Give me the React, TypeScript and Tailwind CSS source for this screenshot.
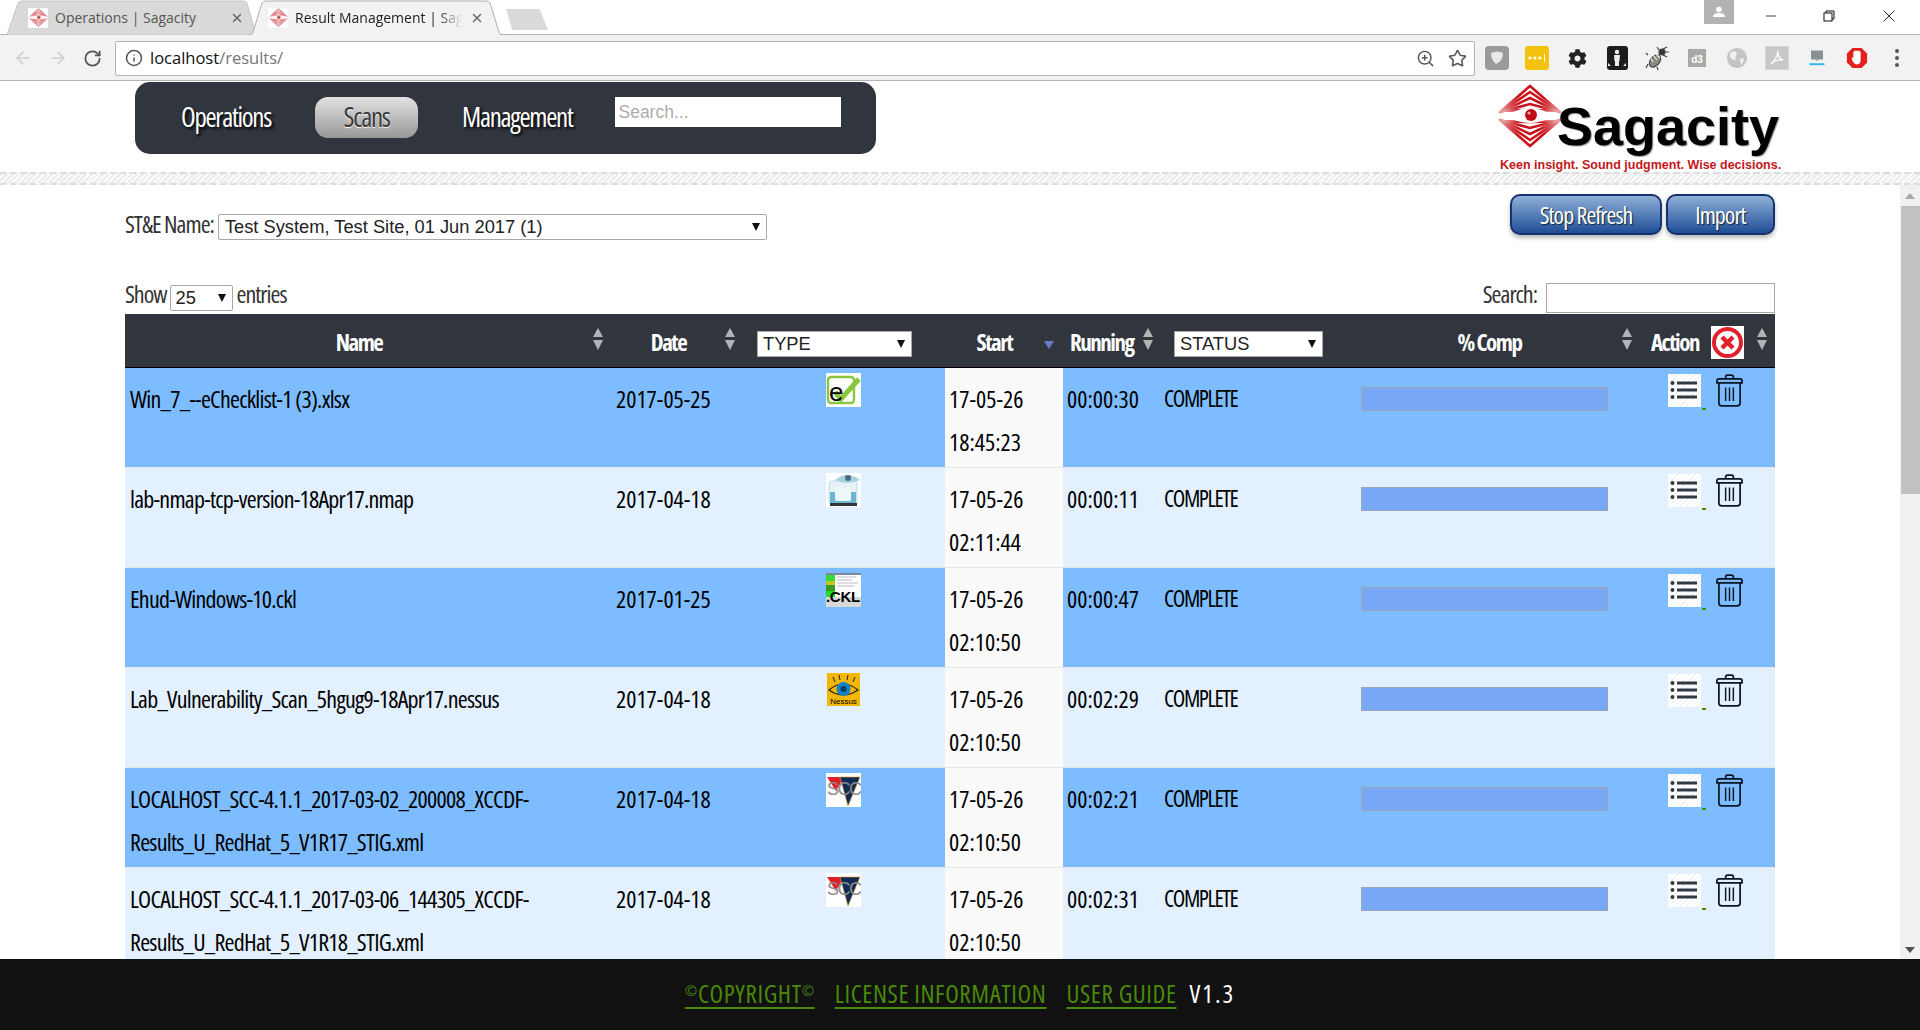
import React from "react";
import { ArrowLeft, ArrowRight, RotateCw, Info, ZoomIn, Star, X, Minus } from "lucide-react";
import { FaCog } from "react-icons/fa";

const rows = [
  { name: ["Win_7_--eChecklist-1 (3).xlsx"], date: "2017-05-25", type: "e", start: ["17-05-26", "18:45:23"], run: "00:00:30" },
  { name: ["lab-nmap-tcp-version-18Apr17.nmap"], date: "2017-04-18", type: "nmap", start: ["17-05-26", "02:11:44"], run: "00:00:11" },
  { name: ["Ehud-Windows-10.ckl"], date: "2017-01-25", type: "ckl", start: ["17-05-26", "02:10:50"], run: "00:00:47" },
  { name: ["Lab_Vulnerability_Scan_5hgug9-18Apr17.nessus"], date: "2017-04-18", type: "nessus", start: ["17-05-26", "02:10:50"], run: "00:02:29" },
  { name: ["LOCALHOST_SCC-4.1.1_2017-03-02_200008_XCCDF-", "Results_U_RedHat_5_V1R17_STIG.xml"], date: "2017-04-18", type: "scc", start: ["17-05-26", "02:10:50"], run: "00:02:21" },
  { name: ["LOCALHOST_SCC-4.1.1_2017-03-06_144305_XCCDF-", "Results_U_RedHat_5_V1R18_STIG.xml"], date: "2017-04-18", type: "scc", start: ["17-05-26", "02:10:50"], run: "00:02:31" },
];

function Diamond({ className }: { className?: string }) {
  const ups = [0, 6, 12, 18, 24];
  return (
    <svg viewBox="0 0 64 64" className={className}>
      <defs>
        <linearGradient id="fade" x1="0" x2="1" y1="0" y2="0">
          <stop offset="0" stopColor="#e8a0a0" />
          <stop offset="0.3" stopColor="#c8141c" />
          <stop offset="0.7" stopColor="#c8141c" />
          <stop offset="1" stopColor="#e8a0a0" />
        </linearGradient>
      </defs>
      {ups.map((d) => (
        <g key={d} fill="none" stroke="url(#fade)" strokeWidth="2.6">
          <path d={`M${1 + d * 0.2} ${29 - d * 0.1}L32 ${2 + d}L${63 - d * 0.2} ${29 - d * 0.1}`} />
          <path d={`M${1 + d * 0.2} ${35 + d * 0.1}L32 ${62 - d}L${63 - d * 0.2} ${35 + d * 0.1}`} />
        </g>
      ))}
      <path d="M8 32Q32 16 56 32Q32 46 8 32Z" fill="#fff" />
      <circle cx="33" cy="31" r="6" fill="#c00d14" />
      <circle cx="31" cy="29" r="1.6" fill="#f6a0a0" />
    </svg>
  );
}

function Tab({ title, active }: { title: string; active?: boolean }) {
  return (
    <div className={`relative flex items-center h-[35px] ${active ? "w-[262px] -ml-[9px] z-10 pl-[21px] pr-[25px]" : "w-[249px] ml-[7px] pl-[21px] pr-[12px]"}`}>
      <svg className="absolute inset-0 w-full h-full" viewBox={active ? "0 0 262 35" : "0 0 249 35"} preserveAspectRatio="none">
        {active ? (
          <path d="M0 35 L2 35 Q5 35 6 32 L15 3 Q16 1 19 1 L239 1 Q242 1 243 3 L252 32 Q253 35 256 35 L262 35" fill="#f2f2f2" stroke="#b0b0b0" />
        ) : (
          <path d="M0 35 L11 3 Q12 1 15 1 L236 1 Q239 1 240 3 L249 35Z" fill="#d9d9d9" stroke="#c4c4c4" />
        )}
      </svg>
      <span className="relative w-[20px] h-[20px] bg-white flex items-center justify-center shrink-0">
        <Diamond className="w-[19px] h-[19px] opacity-75" />
      </span>
      <span className={`relative ml-[7px] flex-1 min-w-0 overflow-hidden whitespace-nowrap text-[14px] font-['Open_Sans'] ${active ? "text-[#222] [mask-image:linear-gradient(to_right,#000_85%,transparent)]" : "text-[#555]"}`}>{title}</span>
      <X className={`relative w-[14px] h-[14px] shrink-0 text-[#666] ${active ? "ml-[8px]" : "ml-[4px]"}`} strokeWidth={2.4} />
    </div>
  );
}

const Slot = ({ children }: { children: React.ReactNode }) => <span className="w-[24px] h-[24px] flex items-center justify-center shrink-0">{children}</span>;

function ExtIcons() {
  return (
    <div className="flex items-center gap-[16px] ml-[10px]">
      <Slot><span className="w-[24px] h-[24px] rounded-[4px] bg-[#9a9a9a] flex items-center justify-center">
        <svg viewBox="0 0 16 16" className="w-[16px] h-[16px]"><path d="M2 3Q8 0 14 3Q14 11 7 14Q2 10 2 3Z" fill="#e8e8e8" /></svg>
      </span></Slot>
      <Slot><span className="w-[24px] h-[24px] rounded-[3px] bg-[#f4c20d] flex items-center justify-center">
        <svg viewBox="0 0 20 8" className="w-[20px] h-[8px]" fill="#fff"><circle cx="3" cy="4" r="1.6" /><circle cx="8" cy="4" r="1.6" /><circle cx="13" cy="4" r="1.6" /><rect x="17" y="0" width="1" height="8" /></svg>
      </span></Slot>
      <Slot><FaCog className="w-[19px] h-[19px] text-[#222]" /></Slot>
      <Slot><span className="w-[21px] h-[24px] rounded-[3px] bg-[#1c1c1c] flex items-center justify-center">
        <svg viewBox="0 0 20 20" className="w-[20px] h-[20px]" fill="#eee"><circle cx="10" cy="4" r="2.2" /><path d="M7 7H13L12.5 13H12V18H8V13H7.5Z" /><path d="M1 15L4 18H1ZM19 15L16 18H19Z" /></svg>
      </span></Slot>
      <Slot><svg viewBox="0 0 24 24" className="w-[24px] h-[24px]" fill="none" stroke="#444" strokeWidth="1.2">
        <ellipse cx="10" cy="15" rx="4.5" ry="7" transform="rotate(40 10 15)" fill="#8a8a80" />
        <path d="M5 11L8 16M8 9L12 14M11 8L15 12" stroke="#eee" />
        <circle cx="17" cy="6" r="3" fill="#333" />
        <path d="M18 3L22 1M20 6H24M18 9L22 11M14 4L12 1M3 18L1 22M12 21L13 24M3 9L1 7" />
      </svg></Slot>
      <Slot><span className="w-[18px] h-[18px] bg-[#a8a8a8] text-white text-[10px] font-bold flex items-end justify-center font-['Liberation_Sans'] leading-[14px]">d3</span></Slot>
      <Slot><svg viewBox="0 0 24 24" className="w-[22px] h-[22px]"><circle cx="12" cy="12" r="11" fill="#c4c4c4" /><path d="M5 6Q10 3 12 7Q9 11 11 14Q6 14 4 10ZM15 13L20 12L17 20Z" fill="#f2f2f2" /></svg></Slot>
      <Slot><span className="w-[24px] h-[24px] bg-[#c8c8c8] border border-[#d6d6d6] flex items-center justify-center">
        <svg viewBox="0 0 16 16" className="w-[16px] h-[16px]" fill="none" stroke="#fff" strokeWidth="1.3"><path d="M2 14Q8 9 9 1Q8 8 14 10Q7 9 2 14Z" /></svg>
      </span></Slot>
      <Slot><svg viewBox="0 0 24 24" className="w-[18px] h-[18px]"><rect x="4" y="2" width="16" height="12" fill="#8a8f93" /><path d="M10 14H14L12 16Z" fill="#8a8f93" /><rect x="2" y="19" width="20" height="2.5" fill="#29b6f6" /></svg></Slot>
      <Slot><svg viewBox="0 0 24 24" className="w-[22px] h-[22px]"><path d="M7 1H17L23 7V17L17 23H7L1 17V7Z" fill="#e2211c" /><path d="M8 12V6Q8 5 9 5V4H15V5Q16 5 16 6V14Q16 19 12 19Q9 19 7 15L6 12Q7 11 8 12Z" fill="#fff" /></svg></Slot>
      <Slot><svg viewBox="0 0 6 20" className="w-[6px] h-[20px]" fill="#555"><circle cx="3" cy="3" r="2" /><circle cx="3" cy="10" r="2" /><circle cx="3" cy="17" r="2" /></svg></Slot>
    </div>
  );
}

function Sel({ label, className }: { label: string; className: string }) {
  return (
    <div className={`relative flex items-center bg-white border border-[#a8a8a8] font-['Liberation_Sans'] [font-stretch:normal] font-normal tracking-normal text-[18.3px] text-[#222] [text-shadow:none] ${className}`}>
      <span className="whitespace-nowrap">{label}</span>
      <span className="absolute right-[6px] top-1/2 -translate-y-1/2 w-0 h-0 border-x-[4px] border-x-transparent border-t-[8px] border-t-[#111]" />
    </div>
  );
}

function SortArrows({ className, down }: { className?: string; down?: boolean }) {
  if (down)
    return (
      <svg viewBox="0 0 10 22" className={`w-[10px] h-[22px] shrink-0 ${className ?? ""}`}><path d="M0 12H10L5 20Z" fill="#6a78c8" /></svg>
    );
  return (
    <svg viewBox="0 0 10 22" className={`w-[10px] h-[22px] shrink-0 -mt-[3px] ${className ?? ""}`}><path d="M5 0L10 9H0Z" fill="#b4b4b4" /><path d="M0 12H10L5 22Z" fill="#b4b4b4" /></svg>
  );
}

function TypeIcon({ t }: { t: string }) {
  if (t === "e")
    return (
      <span className="relative block w-[35px] h-[34px] bg-white overflow-hidden">
        <svg viewBox="0 0 35 34" className="w-full h-full">
          <rect x="2" y="4" width="26" height="26" rx="3" fill="none" stroke="#8cc63f" strokeWidth="2.4" />
          <path d="M9 19L15 26L33 6" fill="none" stroke="#8cc63f" strokeWidth="5" />
        </svg>
        <span className="absolute left-[3px] top-[6px] text-[26px] leading-[26px] text-black font-['Liberation_Sans'] [font-stretch:normal] tracking-normal">e</span>
      </span>
    );
  if (t === "nmap")
    return (
      <span className="block w-[35px] h-[34px] bg-white">
        <svg viewBox="0 0 35 34" className="w-full h-full">
          <rect x="3" y="8" width="28" height="23" rx="3" fill="#e6f2f6" stroke="#bcd8e2" />
          <rect x="4" y="19" width="26" height="11" fill="#6db6cf" />
          <rect x="9" y="14" width="16" height="14" rx="2" fill="#eef7fa" />
          <rect x="4" y="30" width="27" height="3" fill="#333" />
          <path d="M9 7Q21 -3 34 7Q21 13 9 7Z" fill="#a6d3e2" />
          <circle cx="22" cy="5" r="3" fill="#4b6b80" />
        </svg>
      </span>
    );
  if (t === "ckl")
    return (
      <span className="relative block w-[35px] h-[34px] bg-white overflow-hidden">
        <svg viewBox="0 0 35 34" className="w-full h-full">
          <rect x="0" y="0" width="35" height="2" fill="#7c8aa0" />
          <rect x="0" y="2" width="9" height="6" fill="#38d838" />
          <rect x="0" y="8" width="9" height="4" fill="#c0c820" />
          <rect x="0" y="12" width="9" height="6" fill="#3a9a28" />
          <rect x="0" y="18" width="9" height="6" fill="#1fe01f" />
          <rect x="0" y="24" width="35" height="10" fill="#d8d8d8" />
          <path d="M11 4H30M11 7H26M11 10H32M11 13H28" stroke="#bbb" strokeWidth="1" />
        </svg>
        <span className="absolute left-0 top-[16px] text-[15px] leading-[16px] font-bold text-black font-['Liberation_Sans'] [font-stretch:normal] tracking-[-0.3px]">.CKL</span>
      </span>
    );
  if (t === "nessus")
    return (
      <span className="relative block ml-[1px] w-[33px] h-[33px] bg-[#f2b705] overflow-hidden">
        <svg viewBox="0 0 33 33" className="w-full h-full">
          <path d="M2 17Q16 5 31 17Q16 27 2 17Z" fill="#f2b705" stroke="#222" strokeWidth="1.2" />
          <circle cx="16.5" cy="16" r="7" fill="#1383c6" />
          <circle cx="16.5" cy="16" r="3" fill="#0a3a66" />
          <path d="M8 9L6 4M13 7L12 2M20 7L21 2M26 9L28 4" stroke="#222" strokeWidth="1" />
        </svg>
        <span className="absolute inset-x-0 bottom-0 text-center text-[8px] leading-[9px] text-black font-['Liberation_Sans'] [font-stretch:normal] tracking-normal">Nessus</span>
      </span>
    );
  return (
    <span className="relative block w-[35px] h-[34px] bg-white overflow-hidden">
      <svg viewBox="0 0 35 34" className="w-full h-full">
        <path d="M1 4H18L10 18Z" fill="#e02027" />
        <path d="M14 4H34L22 33Z" fill="#0e2a55" stroke="#e8a020" strokeWidth="0.6" />
      </svg>
      <span className="absolute left-[1px] top-[6px] text-[18px] leading-[20px] tracking-[-1.5px] text-[#8a8a8a] font-normal font-['Liberation_Sans'] [font-stretch:normal]">SCC</span>
    </span>
  );
}

function ListIcon() {
  return (
    <span className="relative block w-[33px] h-[33px] bg-[repeating-linear-gradient(135deg,#ffffff_0px,#ffffff_3px,#f0f0f0_3px,#f0f0f0_4px)]">
      <svg viewBox="0 0 33 33" className="w-full h-full" fill="#2f3b44">
        <circle cx="4.5" cy="9" r="2" /><rect x="9" y="7.5" width="20" height="3" />
        <circle cx="4.5" cy="16" r="2" /><rect x="9" y="14.5" width="20" height="3" />
        <circle cx="4.5" cy="23" r="2" /><rect x="9" y="21.5" width="20" height="3" />
      </svg>
      <span className="absolute -right-[5px] bottom-[-3px] w-[4px] h-[2px] bg-[#4a8a08]" />
    </span>
  );
}

function Trash() {
  return (
    <svg viewBox="0 0 28 34" className="w-[27px] h-[33px]" fill="none" stroke="#0c1622" strokeWidth="1.8">
      <path d="M10 4V3Q10 1 12 1H16Q18 1 18 3V4" />
      <path d="M3 5H25Q27 5 27 7V9H1V7Q1 5 3 5Z" />
      <path d="M3 9V30Q3 33 6 33H22Q25 33 25 30V9" />
      <path d="M10 14V28M14 14V28M18 14V28" strokeWidth="1.5" />
    </svg>
  );
}

export default function App() {
  return (
    <div className="w-[1920px] h-[1030px] flex flex-col overflow-hidden bg-white font-['Open_Sans',sans-serif] [font-stretch:75%] text-[#111]">
      {/* tab strip */}
      <div className="relative flex h-[35px] shrink-0 bg-white border-b border-[#b4b4b4] [font-stretch:normal]">
        <Tab title="Operations | Sagacity" />
        <Tab title="Result Management | Sagacity" active />
        <span className="ml-[-3px] mt-[9px] w-[42px] h-[21px] bg-[#d9d9d9] [clip-path:polygon(0_0,80%_0,100%_100%,15%_100%)]" />
        <div className="ml-auto flex items-start text-[#111]">
          <span className="w-[30px] h-[24px] bg-[#b2b2b2] flex items-center justify-center">
            <svg viewBox="0 0 12 12" className="w-[12px] h-[12px]" fill="#fff"><circle cx="6" cy="3.5" r="2.8" /><path d="M0 11Q0 7 6 7Q12 7 12 11Z" /></svg>
          </span>
          <span className="w-[62px] h-[32px] flex items-center justify-center pl-[12px]"><Minus className="w-[16px] h-[16px]" strokeWidth={1.2} /></span>
          <span className="w-[62px] h-[32px] flex items-center justify-center pl-[4px]">
            <svg viewBox="0 0 12 12" className="w-[12px] h-[12px]" fill="none" stroke="#111"><path d="M3 3V1H11V9H9" /><rect x="1" y="3" width="8" height="8" /></svg>
          </span>
          <span className="w-[62px] h-[32px] flex items-center justify-center"><X className="w-[20px] h-[20px]" strokeWidth={1.1} /></span>
        </div>
      </div>
      {/* toolbar */}
      <div className="flex items-center h-[46px] pt-[1px] shrink-0 bg-[#f2f2f2] border-b border-[#b4b4b4] [font-stretch:normal]">
        <div className="flex items-center w-[115px] pl-[13px] gap-[15px]">
          <ArrowLeft className="w-[20px] h-[20px] text-[#d0d0d0]" strokeWidth={2} />
          <ArrowRight className="w-[20px] h-[20px] text-[#d0d0d0]" strokeWidth={2} />
          <RotateCw className="w-[19px] h-[19px] text-[#555]" strokeWidth={2.2} />
        </div>
        <div className="flex items-center w-[1360px] h-[35px] bg-white border border-[#b4b4b4] rounded-[2px] pl-[9px] pr-[7px]">
          <Info className="w-[18px] h-[18px] text-[#555]" strokeWidth={2} />
          <span className="ml-[7px] text-[16.5px] font-['Open_Sans'] text-[#111]">localhost<span className="text-[#777]">/results/</span></span>
          <ZoomIn className="ml-auto w-[19px] h-[19px] text-[#555]" strokeWidth={1.8} />
          <Star className="ml-[13px] w-[19px] h-[19px] text-[#555]" strokeWidth={2} />
        </div>
        <ExtIcons />
      </div>
      {/* app header */}
      <div className="flex h-[104px] shrink-0 relative">
        <div className="ml-[135px] mt-[1px] w-[741px] h-[72px] bg-[#31353d] rounded-[15px] flex items-start text-white text-[27px] font-medium tracking-[-1.3px] [text-shadow:2px_2px_3px_#000]">
          <span className="ml-[46px] mt-[15px] leading-[40px]">Operations</span>
          <span className="ml-[44px] mt-[15px] w-[103px] h-[41px] rounded-[13px] bg-gradient-to-b from-[#e2e2e2] to-[#999] text-[#3a3a3a] flex items-center justify-center [text-shadow:0_1px_1px_#fff]">Scans</span>
          <span className="ml-[44px] mt-[15px] leading-[40px]">Management</span>
          <input readOnly placeholder="Search..." className="ml-[43px] mt-[15px] w-[226px] h-[30px] bg-white px-[3px] text-[17.5px] font-['Liberation_Sans'] [font-stretch:normal] tracking-normal font-normal text-[#555] [text-shadow:none] outline-none" />
        </div>
        <div className="ml-[622px] mt-[3px] w-[290px] flex flex-col [font-stretch:normal]">
          <div className="flex items-start h-[74px]">
            <Diamond className="w-[64px] h-[64px] shrink-0" />
            <span className="font-['Liberation_Sans'] font-bold text-[54px] leading-[60px] mt-[12px] text-black -ml-[5px] [text-shadow:1px_1px_1px_#999]">Sagacity</span>
          </div>
          <span className="font-['Liberation_Sans'] font-bold text-[12.5px] leading-[14px] text-[#c4161c] ml-[2px] whitespace-nowrap">Keen insight. Sound judgment. Wise decisions.</span>
        </div>
        <div className="absolute left-0 right-0 bottom-0 h-[13px] border-y-2 border-dashed border-[#dcdcdc] bg-[repeating-linear-gradient(135deg,#ececec_0px,#ececec_2px,#fafafa_2px,#fafafa_4px)]" />
      </div>
      {/* scrolling body */}
      <div className="flex flex-1 min-h-0">
        <div className="flex-1 overflow-hidden pl-[125px] pr-[125px]">
          <div className="flex items-start justify-between h-[96px] pt-[9px]">
            <div className="flex items-center pt-[17px] text-[24px] tracking-[-1px] text-[#333] leading-[26px]">
              <span className="pb-[6px]">ST&amp;E Name:</span>
              <Sel label="Test System, Test Site, 01 Jun 2017 (1)" className="ml-[4px] w-[549px] h-[26px] pl-[6px] rounded-[2px]" />
            </div>
            <div className="flex gap-[4px] text-white text-[24px] tracking-[-1px] [text-shadow:1px_1px_1px_#123]">
              <span className="w-[152px] h-[41px] rounded-[10px] border-2 border-[#17306e] bg-gradient-to-b from-[#8fb0d8] to-[#1f4e96] shadow-[0_3px_4px_#bbb] flex items-center justify-center">Stop Refresh</span>
              <span className="w-[109px] h-[41px] rounded-[10px] border-2 border-[#17306e] bg-gradient-to-b from-[#8fb0d8] to-[#1f4e96] shadow-[0_3px_4px_#bbb] flex items-center justify-center">Import</span>
            </div>
          </div>
          <div className="flex items-center justify-between h-[33px] text-[24px] tracking-[-1px] text-[#333]">
            <div className="flex items-center">
              <span className="pb-[8px]">Show</span>
              <Sel label="25" className="ml-[3px] w-[63px] h-[26px] pl-[5px] rounded-[2px]" />
              <span className="ml-[4px] pb-[8px]">entries</span>
            </div>
            <div className="flex items-center">
              <span className="pb-[8px]">Search:</span>
              <span className="ml-[9px] w-[229px] h-[30px] bg-white border border-[#a8a8a8] block" />
            </div>
          </div>
          <table className="table-fixed border-collapse w-[1650px]">
            <colgroup>
              <col className="w-[487px]" /><col className="w-[138px]" /><col className="w-[195px]" /><col className="w-[118px]" />
              <col className="w-[97px]" /><col className="w-[197px]" /><col className="w-[278px]" /><col className="w-[140px]" />
            </colgroup>
            <thead>
              <tr className="h-[53px] bg-[#31353d] text-white text-[23px] tracking-[-1.5px] font-bold border-b border-black">
                <th className="p-0 font-bold"><div className="flex items-center"><span className="flex-1 text-center pt-[3px]">Name</span><SortArrows className="mr-[9px]" /></div></th>
                <th className="p-0 font-bold"><div className="flex items-center"><span className="flex-1 text-center pt-[3px]">Date</span><SortArrows className="mr-[15px]" /></div></th>
                <th className="p-0 font-normal"><Sel label="TYPE" className="ml-[7px] mt-[7px] w-[155px] h-[26px] pl-[5px] text-left" /></th>
                <th className="p-0 font-bold"><div className="flex items-center"><span className="flex-1 text-center pt-[3px]">Start</span><SortArrows down className="mr-[9px]" /></div></th>
                <th className="p-0 font-bold"><div className="flex items-center pl-[7px]"><span className="pt-[3px]">Running</span><SortArrows className="ml-[9px]" /></div></th>
                <th className="p-0 font-normal"><Sel label="STATUS" className="ml-[14px] mt-[7px] w-[149px] h-[26px] pl-[5px] text-left" /></th>
                <th className="p-0 font-bold"><div className="flex items-center"><span className="flex-1 text-center pt-[3px]">% Comp</span><SortArrows className="mr-[3px]" /></div></th>
                <th className="p-0 font-bold">
                  <div className="flex items-center pl-[16px]">
                    <span className="pt-[3px]">Action</span>
                    <svg viewBox="0 0 33 33" className="ml-[12px] mt-[5px] w-[33px] h-[33px] bg-white shrink-0">
                      <circle cx="16.5" cy="16.5" r="13.5" fill="none" stroke="#e0202a" strokeWidth="4" />
                      <path d="M11 11L22 22M22 11L11 22" stroke="#e0202a" strokeWidth="4.5" />
                    </svg>
                    <SortArrows className="ml-[13px]" />
                  </div>
                </th>
              </tr>
            </thead>
            <tbody className="text-[24px] text-black">
              {rows.map((r, i) => (
                <tr key={i} className={`h-[100px] border-b border-[#e6e6e6] ${i % 2 === 0 ? "bg-[#7dbcff]" : "bg-[#e3f0ff]"}`}>
                  <td className="p-0 pt-[9px] pl-[5px] align-top leading-[43px] tracking-[-0.75px]">{r.name.map((n) => <div key={n} className="whitespace-nowrap">{n}</div>)}</td>
                  <td className="p-0 pt-[9px] pl-[4px] align-top leading-[43px]">{r.date}</td>
                  <td className="p-0 pt-[5px] pl-[76px] align-top"><TypeIcon t={r.type} /></td>
                  <td className="p-0 pt-[9px] pl-[4px] align-top leading-[43px] bg-[#fafafa]">{r.start.map((s, k) => <div key={k}>{s}</div>)}</td>
                  <td className="p-0 pt-[9px] pl-[4px] align-top leading-[43px]">{r.run}</td>
                  <td className="p-0 pt-[9px] pl-[4px] align-top leading-[43px] text-[23px] tracking-[-1.4px]">COMPLETE</td>
                  <td className="p-0 pt-[19px] pl-[4px] align-top"><div className="w-[247px] h-[24px] bg-[#78a8f5] border border-[#9aa6b8]" /></td>
                  <td className="p-0 pt-[6px] pl-[33px] align-top"><div className="flex gap-[15px]"><ListIcon /><Trash /></div></td>
                </tr>
              ))}
            </tbody>
          </table>
        </div>
        <div className="w-[20px] shrink-0 bg-[#f1f1f1] flex flex-col items-center">
          <span className="mt-[8px] w-0 h-0 border-x-[5px] border-x-transparent border-b-[6px] border-b-[#a8a8a8]" />
          <span className="mt-[7px] ml-[1px] w-[19px] h-[288px] bg-[#c1c1c1]" />
          <span className="mt-auto mb-[6px] w-0 h-0 border-x-[5px] border-x-transparent border-t-[6px] border-t-[#505050]" />
        </div>
      </div>
      {/* footer */}
      <div className="h-[71px] shrink-0 bg-[#111] flex items-center justify-center gap-[20px] text-[25px] tracking-[0.6px] text-[#4a8a08] pb-[1px]">
        <span className="underline underline-offset-4"><span className="text-[15px] align-[7px]">©</span>COPYRIGHT<span className="text-[15px] align-[7px]">©</span></span>
        <span className="underline underline-offset-4">LICENSE INFORMATION</span>
        <span className="underline underline-offset-4 -mr-[7px]">USER GUIDE</span>
        <span className="text-white tracking-[2px]">V1.3</span>
      </div>
    </div>
  );
}
